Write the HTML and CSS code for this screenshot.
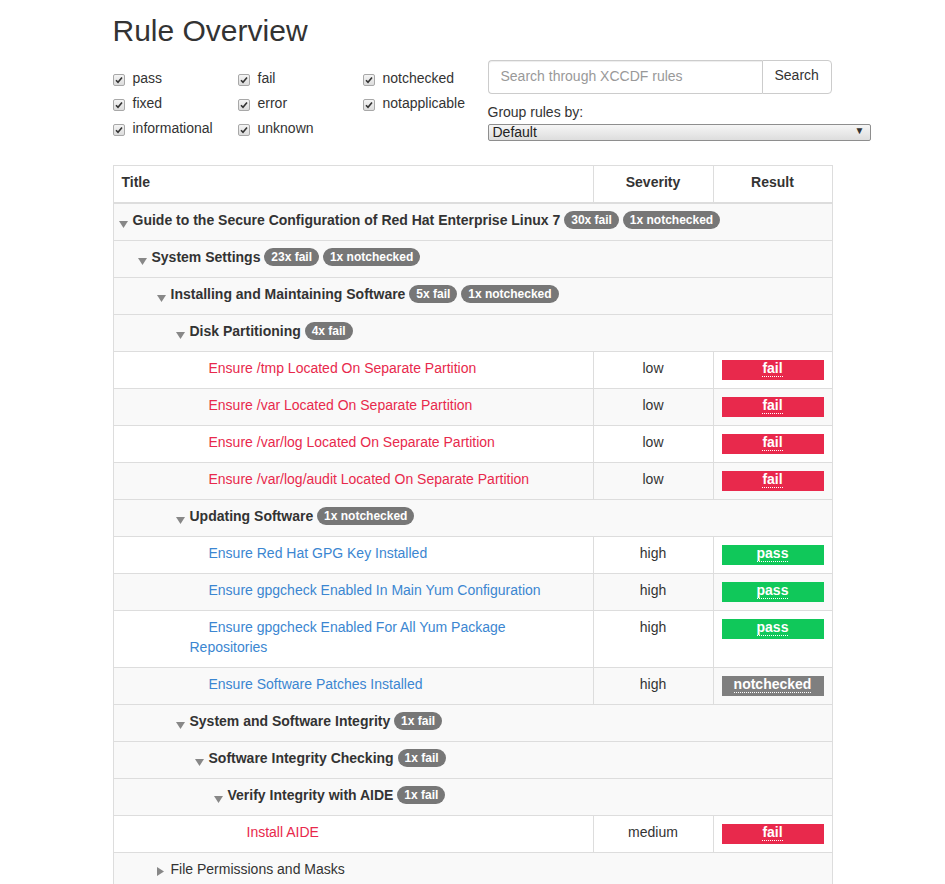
FILE: index.html
```html
<!DOCTYPE html>
<html>
<head>
<meta charset="utf-8">
<title>Rule Overview</title>
<link rel="stylesheet" href="styles.css">
</head>
<body>
<div class="container">
  <h2 class="page-title">Rule Overview</h2>
  <div class="top-row">
    <div class="filters">
      <label class="cb"><span class="box"><svg width="8" height="8" viewBox="0 0 8 8"><path d="M1 4.2 L3 6.3 L7 1.5" fill="none" stroke="#333" stroke-width="1.6"/></svg></span>pass</label>
      <label class="cb"><span class="box"><svg width="8" height="8" viewBox="0 0 8 8"><path d="M1 4.2 L3 6.3 L7 1.5" fill="none" stroke="#333" stroke-width="1.6"/></svg></span>fail</label>
      <label class="cb"><span class="box"><svg width="8" height="8" viewBox="0 0 8 8"><path d="M1 4.2 L3 6.3 L7 1.5" fill="none" stroke="#333" stroke-width="1.6"/></svg></span>notchecked</label>
      <label class="cb"><span class="box"><svg width="8" height="8" viewBox="0 0 8 8"><path d="M1 4.2 L3 6.3 L7 1.5" fill="none" stroke="#333" stroke-width="1.6"/></svg></span>fixed</label>
      <label class="cb"><span class="box"><svg width="8" height="8" viewBox="0 0 8 8"><path d="M1 4.2 L3 6.3 L7 1.5" fill="none" stroke="#333" stroke-width="1.6"/></svg></span>error</label>
      <label class="cb"><span class="box"><svg width="8" height="8" viewBox="0 0 8 8"><path d="M1 4.2 L3 6.3 L7 1.5" fill="none" stroke="#333" stroke-width="1.6"/></svg></span>notapplicable</label>
      <label class="cb"><span class="box"><svg width="8" height="8" viewBox="0 0 8 8"><path d="M1 4.2 L3 6.3 L7 1.5" fill="none" stroke="#333" stroke-width="1.6"/></svg></span>informational</label>
      <label class="cb"><span class="box"><svg width="8" height="8" viewBox="0 0 8 8"><path d="M1 4.2 L3 6.3 L7 1.5" fill="none" stroke="#333" stroke-width="1.6"/></svg></span>unknown</label>
    </div>
    <div class="search-col">
      <div class="input-group">
        <input class="search-input" type="text" placeholder="Search through XCCDF rules">
        <button class="search-btn" type="button">Search</button>
      </div>
      <div class="group-label">Group rules by:</div>
      <div class="select-wrap">
        <div class="select">Default</div>
        <span class="select-arrow">▼</span>
      </div>
    </div>
  </div>

  <table class="rules">
    <colgroup><col class="c-title"><col class="c-sev"><col class="c-res"></colgroup>
    <thead>
      <tr><th>Title</th><th class="center">Severity</th><th class="center">Result</th></tr>
    </thead>
    <tbody>
      <tr class="group"><td colspan="3" class="lvl0"><span class="ind"><svg class="tri" width="9" height="7" viewBox="0 0 9 7"><path d="M0 0 H9 L4.5 7 Z" fill="#888"/></svg></span><b>Guide to the Secure Configuration of Red Hat Enterprise Linux 7</b> <span class="badge">30x fail</span> <span class="badge">1x notchecked</span></td></tr>
      <tr class="group"><td colspan="3" class="lvl1"><span class="ind"><svg class="tri" width="9" height="7" viewBox="0 0 9 7"><path d="M0 0 H9 L4.5 7 Z" fill="#888"/></svg></span><b>System Settings</b> <span class="badge">23x fail</span> <span class="badge">1x notchecked</span></td></tr>
      <tr class="group"><td colspan="3" class="lvl2"><span class="ind"><svg class="tri" width="9" height="7" viewBox="0 0 9 7"><path d="M0 0 H9 L4.5 7 Z" fill="#888"/></svg></span><b>Installing and Maintaining Software</b> <span class="badge">5x fail</span> <span class="badge">1x notchecked</span></td></tr>
      <tr class="group"><td colspan="3" class="lvl3"><span class="ind"><svg class="tri" width="9" height="7" viewBox="0 0 9 7"><path d="M0 0 H9 L4.5 7 Z" fill="#888"/></svg></span><b>Disk Partitioning</b> <span class="badge">4x fail</span></td></tr>
      <tr class="rule"><td class="lvl4"><span class="ind"></span><a class="t-fail" href="#">Ensure /tmp Located On Separate Partition</a></td><td class="center">low</td><td class="res-cell"><div class="res fail"><abbr>fail</abbr></div></td></tr>
      <tr class="rule alt"><td class="lvl4"><span class="ind"></span><a class="t-fail" href="#">Ensure /var Located On Separate Partition</a></td><td class="center">low</td><td class="res-cell"><div class="res fail"><abbr>fail</abbr></div></td></tr>
      <tr class="rule"><td class="lvl4"><span class="ind"></span><a class="t-fail" href="#">Ensure /var/log Located On Separate Partition</a></td><td class="center">low</td><td class="res-cell"><div class="res fail"><abbr>fail</abbr></div></td></tr>
      <tr class="rule alt"><td class="lvl4"><span class="ind"></span><a class="t-fail" href="#">Ensure /var/log/audit Located On Separate Partition</a></td><td class="center">low</td><td class="res-cell"><div class="res fail"><abbr>fail</abbr></div></td></tr>
      <tr class="group"><td colspan="3" class="lvl3"><span class="ind"><svg class="tri" width="9" height="7" viewBox="0 0 9 7"><path d="M0 0 H9 L4.5 7 Z" fill="#888"/></svg></span><b>Updating Software</b> <span class="badge">1x notchecked</span></td></tr>
      <tr class="rule"><td class="lvl4"><span class="ind"></span><a class="t-pass" href="#">Ensure Red Hat GPG Key Installed</a></td><td class="center">high</td><td class="res-cell"><div class="res pass"><abbr>pass</abbr></div></td></tr>
      <tr class="rule alt"><td class="lvl4"><span class="ind"></span><a class="t-pass" href="#">Ensure gpgcheck Enabled In Main Yum Configuration</a></td><td class="center">high</td><td class="res-cell"><div class="res pass"><abbr>pass</abbr></div></td></tr>
      <tr class="rule"><td class="lvl4"><span class="ind"></span><a class="t-pass" href="#">Ensure gpgcheck Enabled For All Yum Package Repositories</a></td><td class="center">high</td><td class="res-cell"><div class="res pass"><abbr>pass</abbr></div></td></tr>
      <tr class="rule alt"><td class="lvl4"><span class="ind"></span><a class="t-pass" href="#">Ensure Software Patches Installed</a></td><td class="center">high</td><td class="res-cell"><div class="res notchecked"><abbr>notchecked</abbr></div></td></tr>
      <tr class="group"><td colspan="3" class="lvl3"><span class="ind"><svg class="tri" width="9" height="7" viewBox="0 0 9 7"><path d="M0 0 H9 L4.5 7 Z" fill="#888"/></svg></span><b>System and Software Integrity</b> <span class="badge">1x fail</span></td></tr>
      <tr class="group"><td colspan="3" class="lvl4"><span class="ind"><svg class="tri" width="9" height="7" viewBox="0 0 9 7"><path d="M0 0 H9 L4.5 7 Z" fill="#888"/></svg></span><b>Software Integrity Checking</b> <span class="badge">1x fail</span></td></tr>
      <tr class="group"><td colspan="3" class="lvl5"><span class="ind"><svg class="tri" width="9" height="7" viewBox="0 0 9 7"><path d="M0 0 H9 L4.5 7 Z" fill="#888"/></svg></span><b>Verify Integrity with AIDE</b> <span class="badge">1x fail</span></td></tr>
      <tr class="rule"><td class="lvl6"><span class="ind"></span><a class="t-fail" href="#">Install AIDE</a></td><td class="center">medium</td><td class="res-cell"><div class="res fail"><abbr>fail</abbr></div></td></tr>
      <tr class="group"><td colspan="3" class="lvl2"><span class="ind"><svg class="tri" width="7" height="9" viewBox="0 0 7 9"><path d="M0 0 V9 L7 4.5 Z" fill="#888"/></svg></span>File Permissions and Masks</td></tr>
    </tbody>
  </table>
</div>
</body>
</html>
```
FILE: styles.css
```css
* { box-sizing: border-box; }
html, body { margin: 0; padding: 0; }
body {
  font-family: "Liberation Sans", Arial, sans-serif;
  font-size: 14px;
  line-height: 20px;
  color: #333;
  background: #fff;
}
.container {
  width: 750px;
  margin: 0 auto;
  padding: 0 15px;
}
.page-title {
  font-size: 30px;
  font-weight: normal;
  line-height: 33px;
  margin: 14px 0 13px;
  color: #333;
}
.top-row {
  display: flex;
}
.filters {
  width: 375px;
  display: grid;
  grid-template-columns: 125px 125px 125px;
  row-gap: 5px;
  align-content: start;
  padding-top: 8px;
}
.cb {
  display: flex;
  align-items: center;
  height: 20px;
  white-space: nowrap;
}
.box {
  width: 12px;
  height: 12px;
  margin-right: 8px;
  margin-top: 3px;
  border: 1px solid #a8a8a8;
  border-radius: 2px;
  background: linear-gradient(#f4f4f4, #dcdcdc);
  display: flex;
  align-items: center;
  justify-content: center;
}
.box svg { display: block; }
.search-col {
  width: 345px;
}
.input-group {
  display: flex;
  width: 344px;
  height: 34px;
}
.search-input {
  flex: 1;
  min-width: 0;
  height: 34px;
  border: 1px solid #ccc;
  border-right: 0;
  border-radius: 4px 0 0 4px;
  padding: 4px 12px 6px;
  font: inherit;
  color: #555;
  box-shadow: inset 0 1px 1px rgba(0,0,0,.075);
  outline: none;
}
.search-input::placeholder { color: #999; }
.search-btn {
  width: 70px;
  height: 34px;
  border: 1px solid #ccc;
  border-radius: 0 4px 4px 0;
  background: #fff;
  font: inherit;
  color: #333;
  padding: 0 12px 4px;
}
.group-label {
  margin-top: 8px;
  line-height: 20px;
}
.select-wrap {
  position: relative;
  width: 383px;
  height: 17px;
  margin-top: 2px;
}
.select {
  height: 17px;
  border: 1px solid #8e8e8e;
  border-radius: 2px;
  background: linear-gradient(#f6f6f6, #dddddd);
  line-height: 15px;
  padding-left: 4px;
  font-size: 14px;
  color: #222;
}
.select-arrow {
  position: absolute;
  right: 6px;
  top: 0;
  font-size: 10px;
  line-height: 13px;
  color: #333;
}
.rules {
  margin-top: 24px;
  width: 719px;
  border-collapse: collapse;
  border: 1px solid #ddd;
  table-layout: fixed;
}
.c-title { width: 480px; }
.c-sev { width: 120px; }
.c-res { width: 119px; }
.rules th, .rules td {
  border: 1px solid #ddd;
  padding: 6px 8px 10px;
  line-height: 20px;
  vertical-align: top;
  text-align: left;
}
.rules td.res-cell {
  padding-top: 8px;
  padding-bottom: 8px;
}
.rules th {
  font-weight: bold;
  border-bottom: 2px solid #ddd;
  padding-top: 6px;
  padding-bottom: 10px;
}
.rules .center { text-align: center; }
.rules tr.group td { background: #f9f9f9; }
.rules tr.rule td { background: #fff; }
.rules tr.rule.alt td { background: #f9f9f9; }
.rules td.lvl0 { padding-left: 0; }
.rules td.lvl1 { padding-left: 19px; }
.rules td.lvl2 { padding-left: 38px; }
.rules td.lvl3 { padding-left: 57px; }
.rules td.lvl4 { padding-left: 76px; }
.rules td.lvl5 { padding-left: 95px; }
.rules td.lvl6 { padding-left: 114px; }
.ind {
  display: inline-block;
  width: 19px;
  padding-left: 5px;
}
.tri { vertical-align: -3px; }
tr.group:last-child .tri { vertical-align: -2px; }
.badge {
  display: inline-block;
  background: #777;
  color: #fff;
  font-size: 12px;
  font-weight: bold;
  line-height: 1;
  padding: 3px 7px;
  border-radius: 10px;
  vertical-align: 1px;
  white-space: nowrap;
}
a { text-decoration: none; }
.t-fail { color: #e8294c; }
.t-pass { color: #3b86d1; }
.res {
  height: 20px;
  line-height: 17px;
  text-align: center;
  color: #fff;
  font-weight: bold;
}
.res abbr {
  text-decoration: none;
  border-bottom: 1px dotted #fff;
}
.res.fail { background: #e8294c; }
.res.pass { background: #10c85a; }
.res.notchecked { background: #7f7f7f; }
```
